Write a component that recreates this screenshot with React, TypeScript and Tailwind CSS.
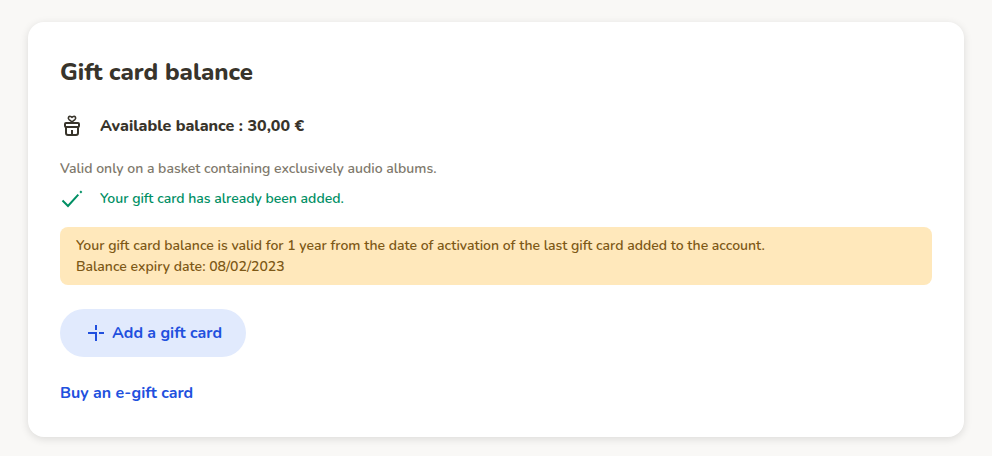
function GiftIcon() {
  return (
    <svg viewBox="0 0 24 24" className="size-6 shrink-0" fill="none" stroke="currentColor" strokeWidth="2" strokeLinecap="round" strokeLinejoin="round" aria-hidden="true">
      <path d="M12 7.9 9.1 5.6C7.2 3.8 9 1.6 11.1 2.7L12 3.4l.9-.7c2.1-1.1 3.9 1.1 2 2.9L12 7.9Z" strokeWidth="1.5" />
      <rect x="5" y="9" width="14" height="4" rx="1" />
      <path d="M6 13v6A2 2 0 0 0 8 21h8a2 2 0 0 0 2-2v-6" />
      <path d="M12 16V20" strokeLinecap="butt" />
    </svg>
  );
}

function CheckIcon() {
  return (
    <svg viewBox="0 0 24 24" className="size-6 shrink-0" fill="none" stroke="currentColor" strokeWidth="2" aria-hidden="true">
      <path d="M2.5 13.5 8 19 18.3 7.7" />
      <path d="M20.2 5.7l1.4-1.5" />
    </svg>
  );
}

function PlusIcon() {
  return (
    <svg viewBox="0 0 24 24" className="size-6 shrink-0" fill="none" stroke="currentColor" strokeWidth="2" aria-hidden="true">
      <path d="M12 4v5M4 12h8v8M15 12h5" />
    </svg>
  );
}

export default function App() {
  return (
    <main className="min-h-screen bg-[#f9f8f6] px-7 pt-[22px] pb-[19px] font-['Nunito','Noto_Sans',sans-serif] text-[#38342b] antialiased">
      <section className="rounded-2xl bg-white p-8 shadow-[0_2px_8px_rgba(0,0,0,0.12)]">
        <h1 className="text-2xl leading-9 font-extrabold">Gift card balance</h1>
        <div className="mt-6 flex items-center gap-4">
          <GiftIcon />
          <p className="text-base leading-6 font-extrabold">Available balance : 30,00 €</p>
        </div>
        <p className="mt-5 text-sm leading-[21px] font-semibold text-[#7e786b]">
          Valid only on a basket containing exclusively audio albums.
        </p>
        <div className="mt-2 flex items-center gap-4 text-[#008f64]">
          <CheckIcon />
          <p className="text-sm leading-6 font-semibold">Your gift card has already been added.</p>
        </div>
        <div className="mt-4 rounded-lg bg-[#ffe8bb] px-4 py-2 text-sm leading-[21px] font-semibold text-[#7d5816]">
          <p>Your gift card balance is valid for 1 year from the date of activation of the last gift card added to the account.</p>
          <p>Balance expiry date: 08/02/2023</p>
        </div>
        <button type="button" className="mt-6 flex h-12 items-center gap-1 rounded-full bg-[#e1eafd] px-6 text-base font-bold text-[#2150de]">
          <PlusIcon />
          Add a gift card
        </button>
        <a href="#buy" className="mt-6 block w-fit text-base leading-6 font-bold text-[#2150de]">
          Buy an e-gift card
        </a>
      </section>
    </main>
  );
}
